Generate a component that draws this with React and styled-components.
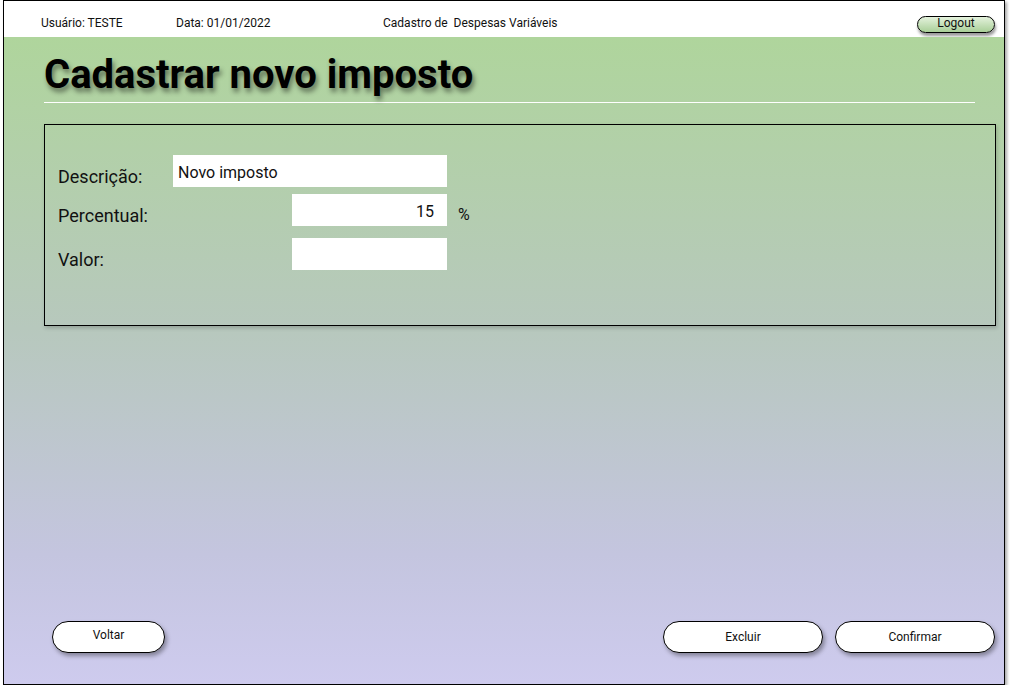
import styled, { createGlobalStyle } from "styled-components";

const GlobalStyle = createGlobalStyle`
  html, body {
    margin: 0;
    padding: 0;
    background: #ffffff;
    font-family: Roboto, "Liberation Sans", sans-serif;
  }
`;

const StyledFrame = styled.div`
  box-sizing: border-box;
  width: 1002px;
  height: 685px;
  margin-left: 3px;
  border: 1px solid #000;
  box-shadow: 2px 2px 3px rgba(0, 0, 0, 0.35);
  display: flex;
  flex-direction: column;
`;
const StyledHeader = styled.div`
  box-sizing: border-box;
  height: 36px;
  background: #fff;
  display: flex;
  align-items: center;
  padding: 7px 9px 0 37px;
  font-size: 12px;
  color: #111;
`;
const StyledHeaderItem = styled.span`
  width: ${(p) => p.w}px;
  white-space: pre;
`;
const StyledLogout = styled.button`
  margin-left: auto;
  box-sizing: border-box;
  width: 78px;
  height: 17px;
  padding: 0 0 2px;
  border: 1.5px solid #000;
  border-radius: 9px;
  background: linear-gradient(#e4f2dc, #a9cf98);
  box-shadow: 1px 3px 3px rgba(0, 0, 0, 0.4);
  font-family: Roboto, "Liberation Sans", sans-serif;
  font-size: 12px;
  line-height: 13px;
  color: #111;
  margin-top: 4px;
`;
const StyledBody = styled.div`
  flex: 1;
  display: flex;
  flex-direction: column;
  background: linear-gradient(#afd59c, #b7c8bd 45%, #c4c5df 80%, #cecbee);
  padding: 15px 9px 31px 40px;
`;
const StyledTitle = styled.h1`
  width: 931px;
  margin: 0;
  padding-bottom: 5px;
  border-bottom: 1px solid #fff;
  font-size: 40px;
  line-height: 45px;
  font-weight: bold;
  color: #000;
  text-shadow: 2px 4px 5px rgba(0, 0, 0, 0.45);
`;
const StyledPanel = styled.div`
  box-sizing: border-box;
  width: 952px;
  height: 202px;
  margin-top: 21px;
  border: 1px solid #000;
  box-shadow: 1px 2px 4px rgba(0, 0, 0, 0.2);
  padding: 30px 0 0 13px;
  display: flex;
  flex-direction: column;
`;
const StyledRow = styled.div`
  display: flex;
  align-items: flex-start;
  height: 32px;
  margin-top: ${(p) => p.gap || 0}px;
`;
const StyledLabel = styled.label`
  width: 115px;
  padding-top: 12px;
  font-size: 18px;
  line-height: 20px;
  color: #111;
`;
const StyledInput = styled.input`
  box-sizing: border-box;
  width: ${(p) => p.w}px;
  height: 32px;
  margin-left: ${(p) => p.offset || 0}px;
  border: none;
  outline: none;
  background: #fff;
  padding: 3px ${(p) => (p.right ? 13 : 5)}px 0 5px;
  text-align: ${(p) => (p.right ? "right" : "left")};
  font-family: Roboto, "Liberation Sans", sans-serif;
  font-size: 16px;
  color: #111;
`;
const StyledUnit = styled.span`
  margin-left: 11px;
  padding-top: 11px;
  font-size: 16px;
  line-height: 20px;
  color: #111;
`;
const StyledFooter = styled.div`
  margin-top: auto;
  display: flex;
  gap: 12px;
  padding-left: 8px;
`;
const StyledButton = styled.button`
  box-sizing: border-box;
  width: ${(p) => p.w}px;
  height: 32px;
  border: 1.5px solid #000;
  border-radius: 16px;
  background: #fff;
  box-shadow: 2px 3px 4px rgba(0, 0, 0, 0.35);
  font-family: Roboto, "Liberation Sans", sans-serif;
  font-size: 12px;
  color: #111;
  padding: 0 0 ${(p) => p.lift || 0}px;
  &:first-child {
    margin-right: auto;
  }
`;

const App = () => {
  return (
    <>
      <GlobalStyle />
      <StyledFrame>
        <StyledHeader>
          <StyledHeaderItem w={135}>Usuário: TESTE</StyledHeaderItem>
          <StyledHeaderItem w={207}>Data: 01/01/2022</StyledHeaderItem>
          <StyledHeaderItem>Cadastro de  Despesas Variáveis</StyledHeaderItem>
          <StyledLogout>Logout</StyledLogout>
        </StyledHeader>
        <StyledBody>
          <StyledTitle>Cadastrar novo imposto</StyledTitle>
          <StyledPanel>
            <StyledRow>
              <StyledLabel>Descrição:</StyledLabel>
              <StyledInput w={274} defaultValue="Novo imposto" />
            </StyledRow>
            <StyledRow gap={7}>
              <StyledLabel>Percentual:</StyledLabel>
              <StyledInput w={155} offset={119} right defaultValue="15" />
              <StyledUnit>%</StyledUnit>
            </StyledRow>
            <StyledRow gap={12}>
              <StyledLabel>Valor:</StyledLabel>
              <StyledInput w={155} offset={119} />
            </StyledRow>
          </StyledPanel>
          <StyledFooter>
            <StyledButton w={113} lift={5}>Voltar</StyledButton>
            <StyledButton w={160}>Excluir</StyledButton>
            <StyledButton w={160}>Confirmar</StyledButton>
          </StyledFooter>
        </StyledBody>
      </StyledFrame>
    </>
  );
};
export default App;
